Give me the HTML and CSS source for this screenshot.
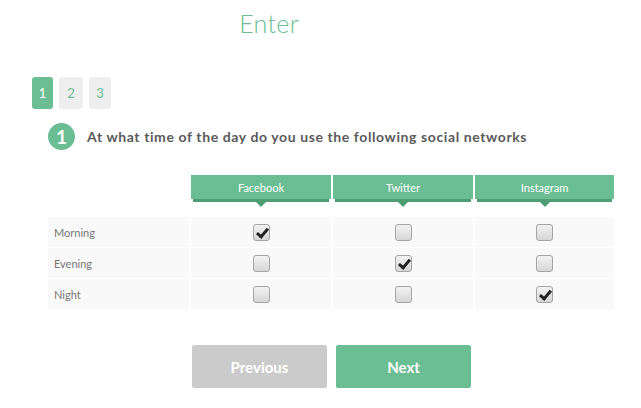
FILE: index.html
```html
<!DOCTYPE html>
<html>
<head>
<meta charset="utf-8">
<link rel="stylesheet" href="styles.css">
</head>
<body>
<div class="page">
  <h1 class="title">Enter</h1>
  <div class="steps">
    <span class="step active">1</span>
    <span class="step">2</span>
    <span class="step">3</span>
  </div>
  <div class="question">
    <span class="qnum">1</span>
    <span class="qtext">At what time of the day do you use the following social networks</span>
  </div>
  <div class="matrix">
    <div class="corner"></div>
    <div class="head"><span class="head-label">Facebook</span></div>
    <div class="head"><span class="head-label">Twitter</span></div>
    <div class="head"><span class="head-label">Instagram</span></div>

    <div class="label">Morning</div>
    <div class="cell"><span class="box checked"></span></div>
    <div class="cell"><span class="box"></span></div>
    <div class="cell"><span class="box"></span></div>

    <div class="label">Evening</div>
    <div class="cell"><span class="box"></span></div>
    <div class="cell"><span class="box checked"></span></div>
    <div class="cell"><span class="box"></span></div>

    <div class="label">Night</div>
    <div class="cell"><span class="box"></span></div>
    <div class="cell"><span class="box"></span></div>
    <div class="cell"><span class="box checked"></span></div>
  </div>
  <div class="actions">
    <button class="btn prev">Previous</button>
    <button class="btn next">Next</button>
  </div>
</div>
</body>
</html>
```
FILE: styles.css
```css
html, body {
  margin: 0;
  padding: 0;
  background: #fff;
  font-family: "Lato", "Open Sans", sans-serif;
}
.page {
  width: 641px;
  height: 408px;
  overflow: hidden;
}
.title {
  margin: 0;
  padding-top: 7px;
  height: 70px;
  box-sizing: border-box;
  text-align: center;
  font-weight: 300;
  font-size: 25px;
  line-height: 32px;
  color: #6bbd94;
  padding-right: 103px;
  letter-spacing: 0.3px;
}
.steps {
  display: flex;
  gap: 6px;
  padding-left: 32px;
  margin-top: 7px;
}
.step {
  display: flex;
  align-items: center;
  justify-content: center;
  width: 22px;
  height: 32px;
  border-radius: 3px;
  background: #eeeeee;
  color: #6bbd94;
  font-size: 13px;
}
.step.active {
  background: #6bbd94;
  color: #fff;
  width: 21px;
}
.step:nth-child(2) { width: 24px; }
.question {
  display: flex;
  align-items: center;
  gap: 12px;
  padding-left: 48px;
  margin-top: 14px;
}
.qnum {
  width: 27px;
  height: 27px;
  border-radius: 50%;
  background: #6bbd94;
  color: #fff;
  font-weight: 700;
  font-size: 19px;
  display: flex;
  align-items: center;
  justify-content: center;
}
.qtext {
  font-weight: 700;
  font-size: 14px;
  color: #5a5a5a;
  letter-spacing: 0.6px;
}
.matrix {
  display: grid;
  grid-template-columns: 141px 140px 140px 139px;
  grid-template-rows: 41px 30px 30px 30px;
  column-gap: 2px;
  row-gap: 1px;
  margin-left: 48px;
  margin-top: 25px;
}
.head {
  position: relative;
  height: 24px;
  background: #6bbd94;
  display: flex;
  align-items: center;
  justify-content: center;
  color: #fff;
  font-size: 11px;
}
.head::before {
  content: "";
  position: absolute;
  left: 2px;
  right: 2px;
  top: 24px;
  height: 3px;
  background: #4f9d75;
}
.head::after {
  content: "";
  position: absolute;
  left: 50%;
  top: 27px;
  margin-left: -5px;
  border-left: 5px solid transparent;
  border-right: 5px solid transparent;
  border-top: 5px solid #4f9d75;
}
.label {
  background: #f9f9f9;
  display: flex;
  align-items: center;
  padding-left: 6px;
  font-size: 11px;
  color: #777;
}
.cell {
  background: #f9f9f9;
  display: flex;
  align-items: center;
  justify-content: center;
}
.box {
  position: relative;
  width: 15px;
  height: 15px;
  border: 1px solid #a5a5a5;
  border-radius: 3px;
  background: linear-gradient(#f2f2f2, #d6d6d6);
}
.box.checked::after {
  content: "";
  position: absolute;
  left: 5px;
  top: 1px;
  width: 4px;
  height: 9px;
  border-right: 3px solid #222;
  border-bottom: 3px solid #222;
  transform: rotate(40deg);
}
.actions {
  display: flex;
  gap: 9px;
  margin-left: 192px;
  margin-top: 36px;
}
.btn {
  width: 135px;
  height: 43px;
  border: 0;
  border-radius: 2px;
  color: #fff;
  font-family: "Lato", sans-serif;
  font-weight: 700;
  font-size: 15px;
}
.btn.prev { background: #cbcbcb; }
.btn.next { background: #6bbd94; }
```
